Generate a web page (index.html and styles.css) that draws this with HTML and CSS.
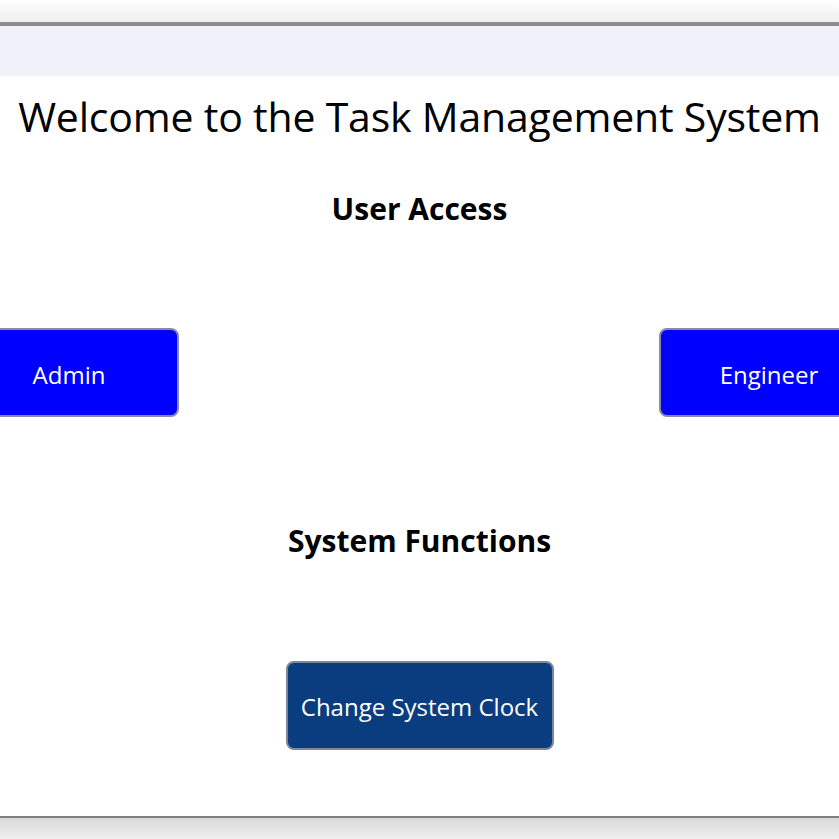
FILE: index.html
```html
<!DOCTYPE html>
<html lang="en">
<head>
<meta charset="utf-8">
<title>Task Management System</title>
<link rel="stylesheet" href="styles.css">
</head>
<body>
<div class="shade-top"></div>
<div class="window">
  <div class="toolbar"></div>
  <main class="content">
    <h1 class="title">Welcome to the Task Management System</h1>
    <h2 class="section-title user-title">User Access</h2>
    <div class="role-row">
      <button class="btn btn-role">Admin</button>
      <button class="btn btn-role">Engineer</button>
    </div>
    <h2 class="section-title func-title">System Functions</h2>
    <div class="func-row">
      <button class="btn btn-func">Change System Clock</button>
    </div>
  </main>
</div>
<div class="shade-bottom"></div>
</body>
</html>
```
FILE: styles.css
```css
* { box-sizing: border-box; }
html, body {
  margin: 0;
  padding: 0;
  height: 839px;
  overflow: hidden;
  background: #ffffff;
  font-family: "Open Sans", "Noto Sans", sans-serif;
}
.shade-top {
  height: 22px;
  background: linear-gradient(#ffffff, #eeeeee);
}
.window {
  border-top: 4px solid #8d8d8d;
  border-bottom: 2px solid #7e7e7e;
  overflow: hidden;
}
.toolbar {
  height: 50px;
  background: #eff2f8;
}
.content {
  height: 740px;
  background: #ffffff;
  padding-top: 16px;
  text-align: center;
  color: #000;
}
.title {
  margin: 0;
  font-size: 41px;
  font-weight: 400;
  line-height: 48px;
  letter-spacing: -0.2px;
}
.section-title {
  margin: 0;
  font-size: 30px;
  font-weight: 700;
  line-height: 36px;
}
.user-title { margin-top: 51px; }
.role-row {
  display: flex;
  justify-content: space-between;
  margin: 101px -40px 0 -41px;
}
.btn {
  height: 89px;
  border: 2px solid #8a8aa8;
  border-radius: 8px;
  color: #ffffff;
  font-family: inherit;
  cursor: pointer;
}
.btn-role {
  width: 220px;
  background: #0000ff;
  font-size: 24px;
  padding-top: 5px;
}
.func-title { margin-top: 106px; }
.func-row {
  display: flex;
  justify-content: center;
  margin-top: 102px;
}
.btn-func {
  width: 268px;
  background: #0a3d80;
  border-color: #7d8796;
  font-size: 24px;
  padding-top: 3px;
}
.shade-bottom {
  height: 21px;
  background: linear-gradient(#d9d9d9, #f0f0f0);
}
```
